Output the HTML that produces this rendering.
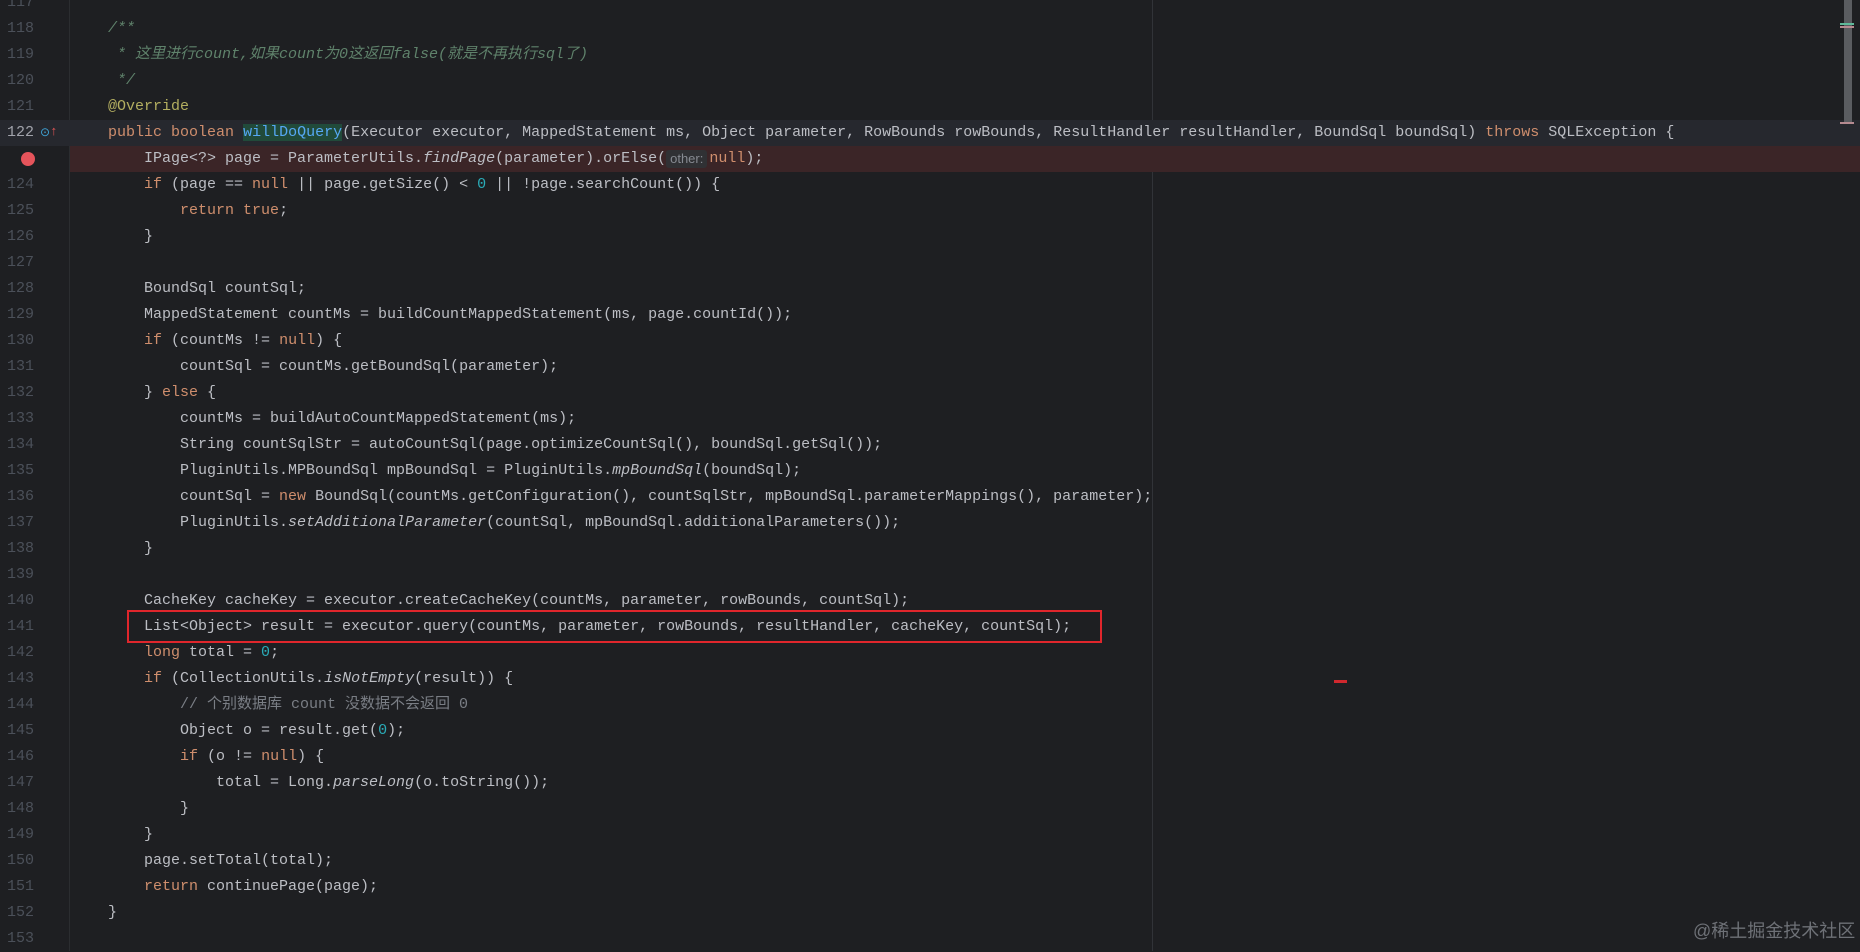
<!DOCTYPE html>
<html><head><meta charset="utf-8"><style>
html,body{margin:0;padding:0;background:#1e1f22;width:1860px;height:951px;overflow:hidden}
#ed{position:absolute;left:0;top:-10px;width:1860px}
.l{position:relative;height:26px;overflow:hidden;font:15px "Liberation Mono",monospace;color:#bcbec4;white-space:pre}
.n,.c{position:absolute;top:0;height:26px;line-height:26px}
.n{left:0;width:34px;text-align:right;color:#4b5059}
.c{left:72px;font-family:"Liberation Mono","Noto Sans CJK SC",monospace}
.k{color:#cf8e6d}.num{color:#2aacb8}.cm{color:#7a7e85}.dc{color:#5f826b;font-style:italic}
.an{color:#b3ae60}.fn{color:#56a8f5;background:#214a3a}.i{font-style:italic}
.cur{background:#26282e}
.hint{display:inline-block;background:#303134;color:#868a91;font:13px "Liberation Sans",sans-serif;line-height:18px;height:18px;padding:0 4px;border-radius:3px;margin:0 2px 0 0;vertical-align:top;margin-top:4px}
</style></head><body>
<div style="position:absolute;left:69px;top:0;width:1px;height:951px;background:#2b2d30"></div>
<div style="position:absolute;left:1152px;top:0;width:1px;height:951px;background:#313338"></div>
<div id="ed">
<div class="l"><span class="n">117</span></div>
<div class="l"><span class="n">118</span><span class="c dc">    /**</span></div>
<div class="l"><span class="n">119</span><span class="c dc">     * 这里进行count,如果count为0这返回false(就是不再执行sql了)</span></div>
<div class="l"><span class="n">120</span><span class="c dc">     */</span></div>
<div class="l"><span class="n">121</span><span class="c an">    @Override</span></div>
<div class="l cur"><span class="n" style="color:#a1a3ab">122</span><span style="position:absolute;left:40px;top:0;line-height:26px;color:#3fa3d6;font-size:12px">⊙</span><span style="position:absolute;left:50px;top:0;line-height:24px;color:#e05555;font-size:13px">↑</span><span class="c">    <span class="k">public boolean</span> <span class="fn">willDoQuery</span>(Executor executor, MappedStatement ms, Object parameter, RowBounds rowBounds, ResultHandler resultHandler, BoundSql boundSql) <span class="k">throws</span> SQLException {</span></div>
<div class="l"><span style="position:absolute;left:21px;top:6px;width:14px;height:14px;border-radius:50%;background:#e5545b"></span><div style="position:absolute;left:70px;right:0;top:0;height:26px;background:#3b2527"></div><span class="c">        IPage&lt;?&gt; page = ParameterUtils.<span class="i">findPage</span>(parameter).orElse(<span class="hint">other:</span><span class="k">null</span>);</span></div>
<div class="l"><span class="n">124</span><span class="c">        <span class="k">if</span> (page == <span class="k">null</span> || page.getSize() &lt; <span class="num">0</span> || !page.searchCount()) {</span></div>
<div class="l"><span class="n">125</span><span class="c">            <span class="k">return true</span>;</span></div>
<div class="l"><span class="n">126</span><span class="c">        }</span></div>
<div class="l"><span class="n">127</span></div>
<div class="l"><span class="n">128</span><span class="c">        BoundSql countSql;</span></div>
<div class="l"><span class="n">129</span><span class="c">        MappedStatement countMs = buildCountMappedStatement(ms, page.countId());</span></div>
<div class="l"><span class="n">130</span><span class="c">        <span class="k">if</span> (countMs != <span class="k">null</span>) {</span></div>
<div class="l"><span class="n">131</span><span class="c">            countSql = countMs.getBoundSql(parameter);</span></div>
<div class="l"><span class="n">132</span><span class="c">        } <span class="k">else</span> {</span></div>
<div class="l"><span class="n">133</span><span class="c">            countMs = buildAutoCountMappedStatement(ms);</span></div>
<div class="l"><span class="n">134</span><span class="c">            String countSqlStr = autoCountSql(page.optimizeCountSql(), boundSql.getSql());</span></div>
<div class="l"><span class="n">135</span><span class="c">            PluginUtils.MPBoundSql mpBoundSql = PluginUtils.<span class="i">mpBoundSql</span>(boundSql);</span></div>
<div class="l"><span class="n">136</span><span class="c">            countSql = <span class="k">new</span> BoundSql(countMs.getConfiguration(), countSqlStr, mpBoundSql.parameterMappings(), parameter);</span></div>
<div class="l"><span class="n">137</span><span class="c">            PluginUtils.<span class="i">setAdditionalParameter</span>(countSql, mpBoundSql.additionalParameters());</span></div>
<div class="l"><span class="n">138</span><span class="c">        }</span></div>
<div class="l"><span class="n">139</span></div>
<div class="l"><span class="n">140</span><span class="c">        CacheKey cacheKey = executor.createCacheKey(countMs, parameter, rowBounds, countSql);</span></div>
<div class="l"><span class="n">141</span><span class="c">        List&lt;Object&gt; result = executor.query(countMs, parameter, rowBounds, resultHandler, cacheKey, countSql);</span></div>
<div class="l"><span class="n">142</span><span class="c">        <span class="k">long</span> total = <span class="num">0</span>;</span></div>
<div class="l"><span class="n">143</span><span class="c">        <span class="k">if</span> (CollectionUtils.<span class="i">isNotEmpty</span>(result)) {</span></div>
<div class="l"><span class="n">144</span><span class="c cm">            // 个别数据库 count 没数据不会返回 0</span></div>
<div class="l"><span class="n">145</span><span class="c">            Object o = result.get(<span class="num">0</span>);</span></div>
<div class="l"><span class="n">146</span><span class="c">            <span class="k">if</span> (o != <span class="k">null</span>) {</span></div>
<div class="l"><span class="n">147</span><span class="c">                total = Long.<span class="i">parseLong</span>(o.toString());</span></div>
<div class="l"><span class="n">148</span><span class="c">            }</span></div>
<div class="l"><span class="n">149</span><span class="c">        }</span></div>
<div class="l"><span class="n">150</span><span class="c">        page.setTotal(total);</span></div>
<div class="l"><span class="n">151</span><span class="c">        <span class="k">return</span> continuePage(page);</span></div>
<div class="l"><span class="n">152</span><span class="c">    }</span></div>
<div class="l"><span class="n">153</span></div>
</div>
<div style="position:absolute;left:127px;top:610px;width:971px;height:29px;border:2px solid #e0262c"></div>
<div style="position:absolute;left:1334px;top:680px;width:13px;height:3px;background:#d0282e"></div>
<div style="position:absolute;left:1844px;top:0;width:8px;height:124px;background:#5a5c60"></div>
<div style="position:absolute;left:1840px;top:23px;width:14px;height:2px;background:#5fb99a"></div>
<div style="position:absolute;left:1840px;top:26px;width:14px;height:2px;background:#b58a90"></div>
<div style="position:absolute;left:1840px;top:122px;width:14px;height:2px;background:#b58a90"></div>
<div style="position:absolute;left:1693px;top:917px;font:18px 'Liberation Sans','Noto Sans CJK SC',sans-serif;color:#6e7177">@稀土掘金技术社区</div>
</body></html>
